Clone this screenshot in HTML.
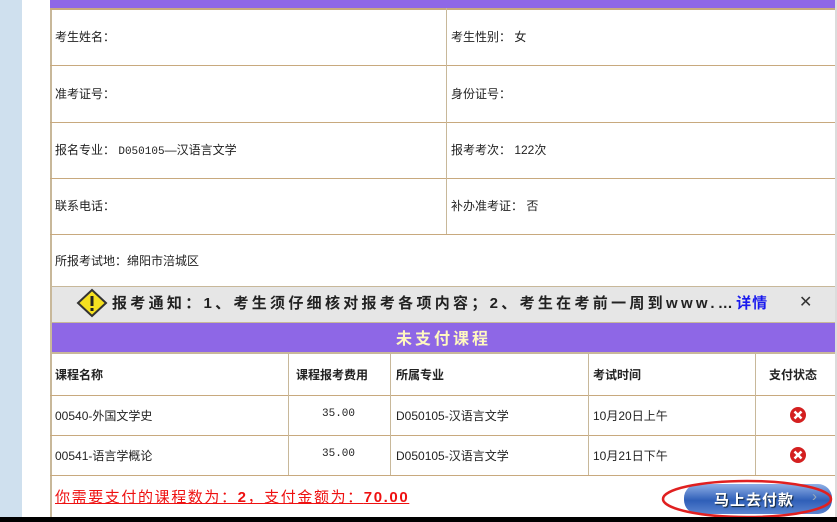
<!DOCTYPE html>
<html><head><meta charset="utf-8"><style>
*{margin:0;padding:0;box-sizing:border-box}
body{width:837px;height:522px;overflow:hidden;background:#fff;font-family:"Liberation Sans","Noto Sans CJK SC",sans-serif;font-size:12px;color:#222;position:relative}
.a{position:absolute}
.t{position:absolute;white-space:nowrap}
.h{background:#c8a97e}
.v{background:#c8b89a}
.m{font-family:"Liberation Mono",monospace;font-size:11px}
</style></head><body>
<div class="a" style="left:0;top:0;width:22px;height:517px;background:#cfe0ee"></div>
<div class="a" style="left:835px;top:0;width:2px;height:517px;background:#dcdcdc"></div>
<div class="a" style="left:50px;top:0;width:785px;height:8px;background:#8e67e6"></div>
<div class="a v" style="left:50px;top:8px;width:2px;height:509px"></div>
<div class="a h" style="left:50px;top:8px;width:785px;height:2px"></div>
<div class="a h" style="left:50px;top:65px;width:785px;height:1px"></div>
<div class="a h" style="left:50px;top:122px;width:785px;height:1px"></div>
<div class="a h" style="left:50px;top:178px;width:785px;height:1px"></div>
<div class="a h" style="left:50px;top:234px;width:785px;height:1px"></div>
<div class="a v" style="left:446px;top:8px;width:1px;height:226px"></div>
<div class="t" style="left:55px;top:28px">考生姓名：</div>
<div class="t" style="left:451px;top:28px">考生性别： 女</div>
<div class="t" style="left:55px;top:85px">准考证号：</div>
<div class="t" style="left:451px;top:85px">身份证号：</div>
<div class="t" style="left:55px;top:141px">报名专业： <span class="m">D050105</span>—汉语言文学</div>
<div class="t" style="left:451px;top:141px">报考考次： 122次</div>
<div class="t" style="left:55px;top:197px">联系电话：</div>
<div class="t" style="left:451px;top:197px">补办准考证： 否</div>
<div class="t" style="left:55px;top:252px">所报考试地：绵阳市涪城区</div>
<div class="a" style="left:52px;top:286px;width:783px;height:36px;background:#e6e6e6;border-top:1px solid #c8b89a"></div>
<svg class="a" style="left:76px;top:288px" width="32" height="30" viewBox="0 0 32 30"><path d="M16 2 L30 15 L16 28 L2 15 Z" fill="#f5e020" stroke="#333" stroke-width="2"/><rect x="14.5" y="8" width="3" height="10" fill="#222"/><rect x="14.5" y="20" width="3" height="3" fill="#222"/></svg>
<div class="t" style="left:112px;top:292px;font-size:15px;font-weight:bold;color:#222;letter-spacing:3.3px">报考通知：1、考生须仔细核对报考各项内容；2、考生在考前一周到www.…<span style="color:#1a1aee;letter-spacing:1px">详情</span></div>
<div class="t" style="left:799px;top:292px;font-size:16px;color:#333">✕</div>
<div class="a" style="left:52px;top:322px;width:783px;height:32px;background:#8e67e6;border-top:1px solid #c8b89a;border-bottom:2px solid #c8b89a"></div>
<div class="t" style="left:52px;top:325px;width:783px;text-align:center;color:#fff8c0;font-size:16px;font-weight:bold;letter-spacing:3px">未支付课程</div>
<div class="a h" style="left:50px;top:395px;width:785px;height:1px"></div>
<div class="a h" style="left:50px;top:435px;width:785px;height:1px"></div>
<div class="a h" style="left:50px;top:475px;width:785px;height:1px"></div>
<div class="a v" style="left:288px;top:354px;width:1px;height:121px"></div>
<div class="a v" style="left:390px;top:354px;width:1px;height:121px"></div>
<div class="a v" style="left:588px;top:354px;width:1px;height:121px"></div>
<div class="a v" style="left:755px;top:354px;width:1px;height:121px"></div>
<div class="t" style="left:55px;top:366px;font-weight:bold">课程名称</div>
<div class="t" style="left:296px;top:366px;font-weight:bold">课程报考费用</div>
<div class="t" style="left:396px;top:366px;font-weight:bold">所属专业</div>
<div class="t" style="left:593px;top:366px;font-weight:bold">考试时间</div>
<div class="t" style="left:769px;top:366px;font-weight:bold">支付状态</div>
<div class="t" style="left:55px;top:407px">00540-外国文学史</div>
<div class="t m" style="left:322px;top:408px">35.00</div>
<div class="t" style="left:396px;top:407px">D050105-汉语言文学</div>
<div class="t" style="left:593px;top:407px">10月20日上午</div>
<div class="t" style="left:55px;top:447px">00541-语言学概论</div>
<div class="t m" style="left:322px;top:448px">35.00</div>
<div class="t" style="left:396px;top:447px">D050105-汉语言文学</div>
<div class="t" style="left:593px;top:447px">10月21日下午</div>
<svg class="a" style="left:789px;top:406px" width="18" height="18"><circle cx="9" cy="9" r="8" fill="#d42020"/><path d="M5.5 5.5L12.5 12.5M12.5 5.5L5.5 12.5" stroke="#fff" stroke-width="2.5"/></svg>
<svg class="a" style="left:789px;top:446px" width="18" height="18"><circle cx="9" cy="9" r="8" fill="#d42020"/><path d="M5.5 5.5L12.5 12.5M12.5 5.5L5.5 12.5" stroke="#fff" stroke-width="2.5"/></svg>
<div class="t" style="left:55px;top:486px;color:#ee1111;font-size:15px;letter-spacing:1.6px;text-decoration:underline">你需要支付的课程数为：<b>2</b>，支付金额为：<b>70.00</b></div>
<div class="a" style="left:684px;top:484px;width:148px;height:30px;border-radius:14px;background:linear-gradient(#8fb0e6,#2f5fb8 55%,#5b85d0)"></div>
<div class="t" style="left:714px;top:489px;font-size:15px;font-weight:bold;color:#fff;letter-spacing:1px;text-shadow:1px 1px 1px #123">马上去付款</div>
<div class="t" style="left:812px;top:488px;font-size:15px;color:#9ab">›</div>
<svg class="a" style="left:660px;top:477px" width="177" height="44"><ellipse cx="87" cy="22" rx="84" ry="18" fill="none" stroke="#e02020" stroke-width="2.5"/></svg>
<div class="a" style="left:0;top:517px;width:837px;height:5px;background:#000"></div>
</body></html>
